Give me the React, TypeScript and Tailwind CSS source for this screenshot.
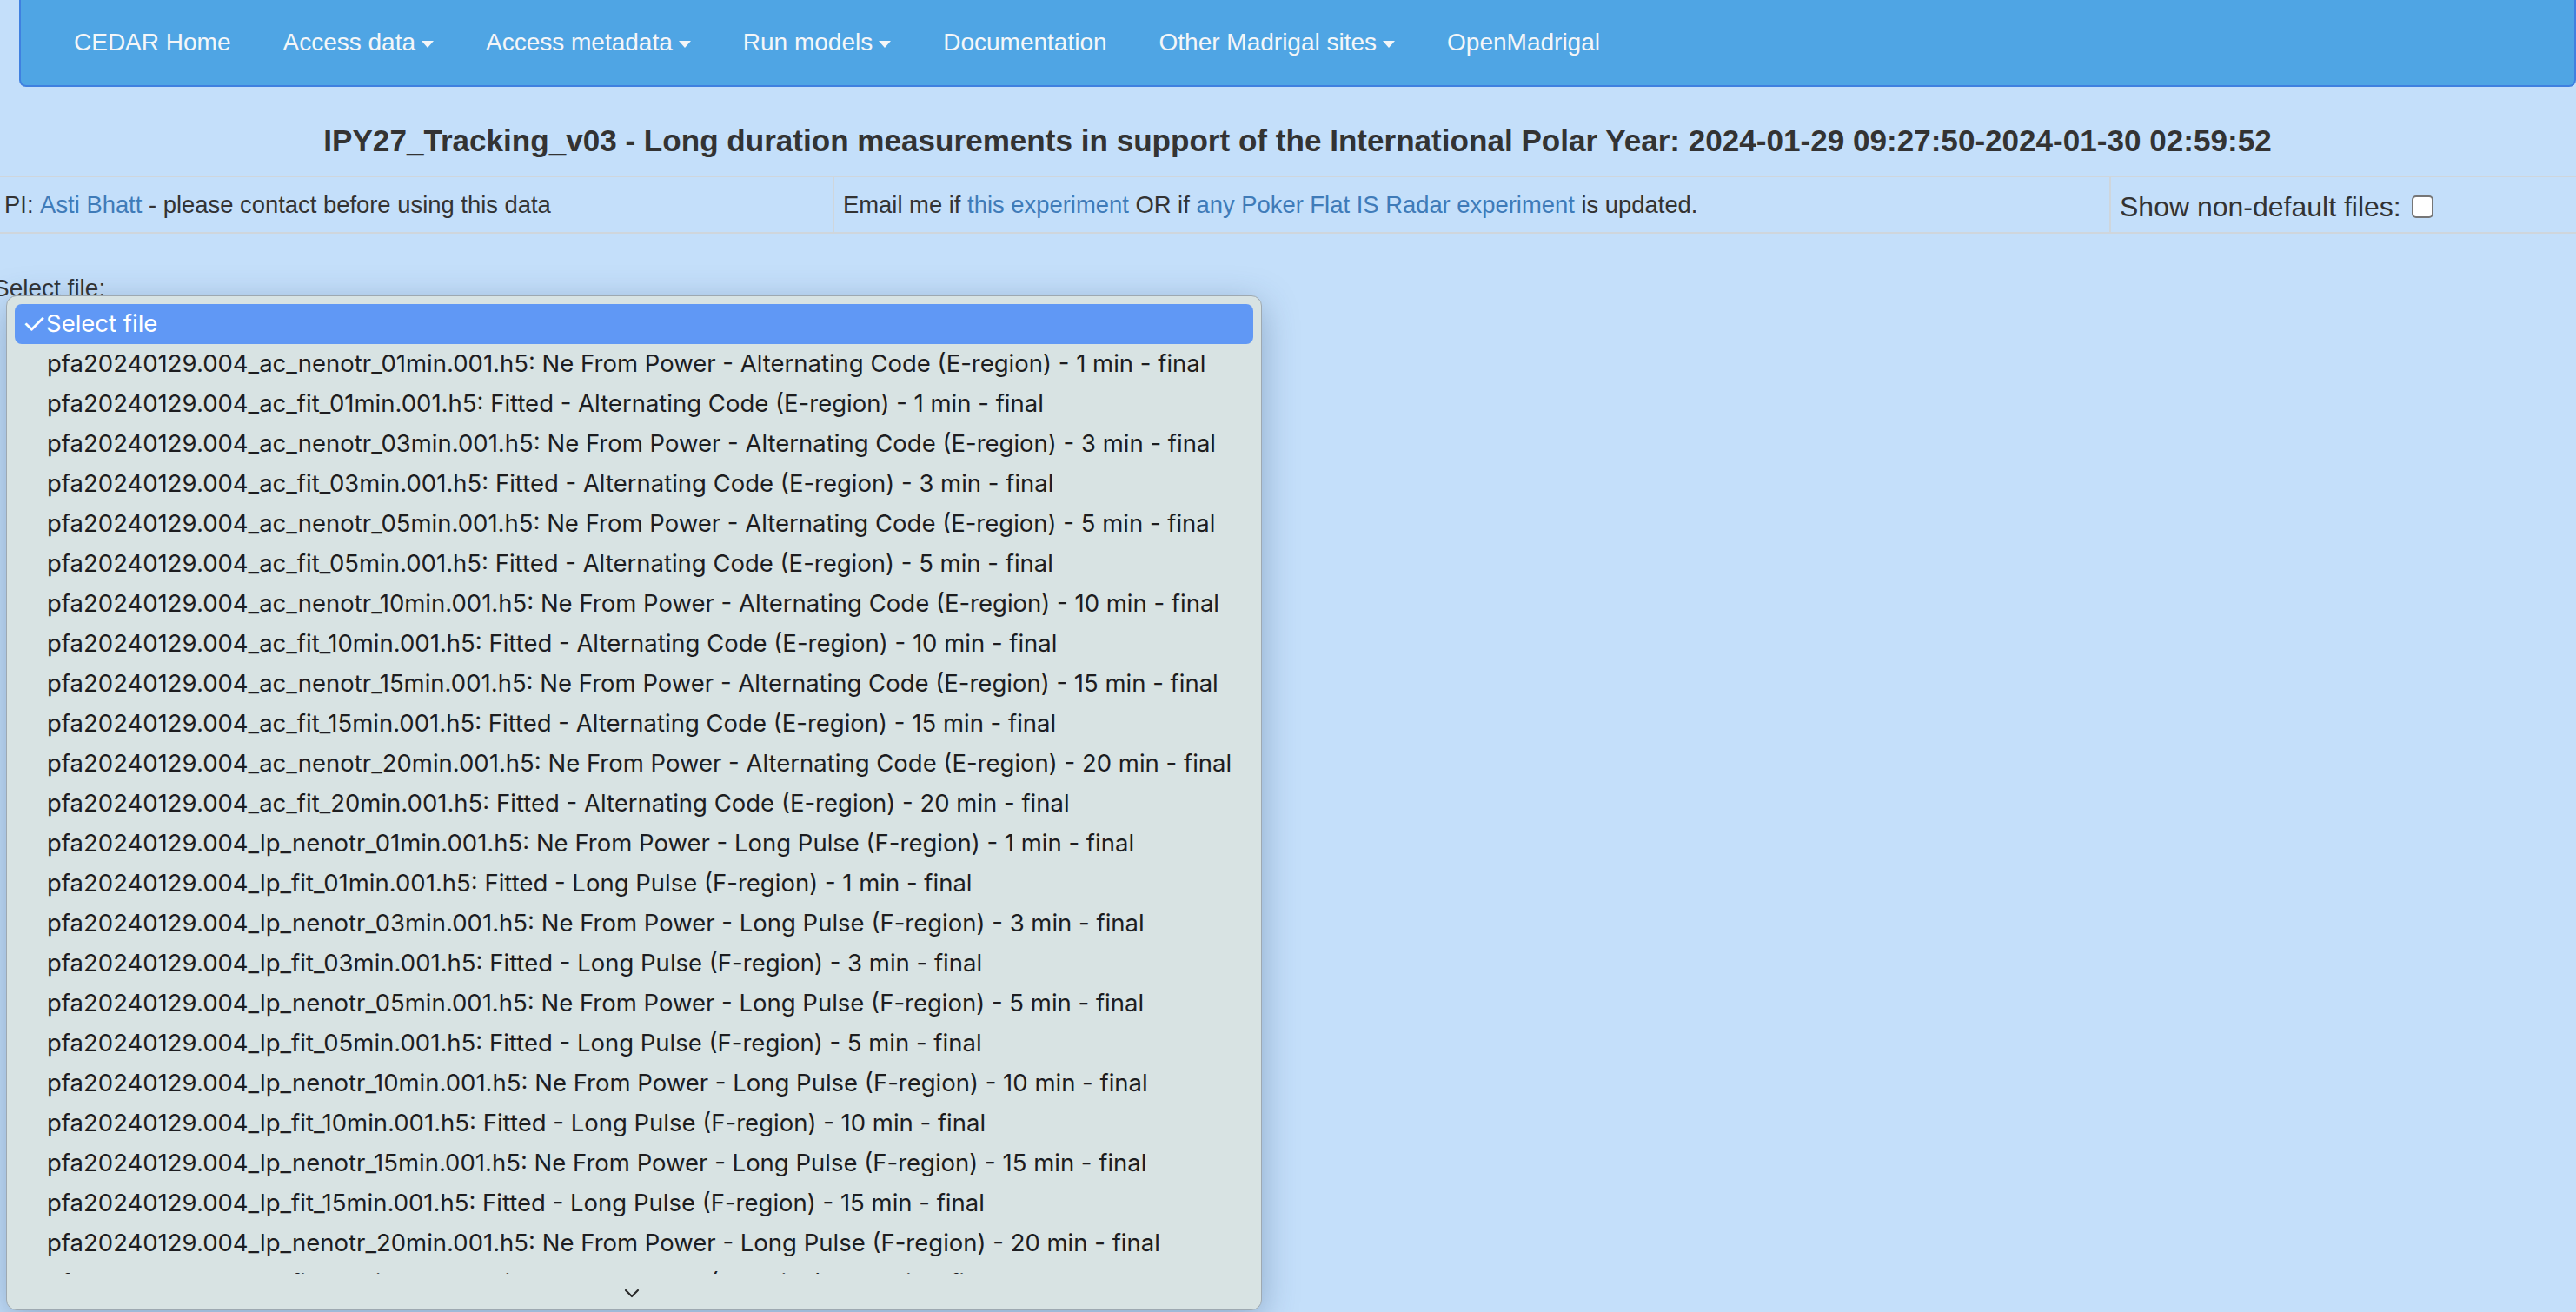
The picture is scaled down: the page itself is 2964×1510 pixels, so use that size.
import React from "react";

const NAV = [
  { label: "CEDAR Home" },
  { label: "Access data", caret: true },
  { label: "Access metadata", caret: true },
  { label: "Run models", caret: true },
  { label: "Documentation" },
  { label: "Other Madrigal sites", caret: true },
  { label: "OpenMadrigal" },
];

const MINS = ["01", "03", "05", "10", "15", "20"];

function buildFiles() {
  const out: string[] = [];
  const groups = [
    { code: "ac", name: "Alternating Code (E-region)" },
    { code: "lp", name: "Long Pulse (F-region)" },
  ];
  for (const g of groups) {
    for (const m of MINS) {
      const n = String(Number(m));
      out.push(`pfa20240129.004_${g.code}_nenotr_${m}min.001.h5: Ne From Power - ${g.name} - ${n} min - final`);
      out.push(`pfa20240129.004_${g.code}_fit_${m}min.001.h5: Fitted - ${g.name} - ${n} min - final`);
    }
  }
  return out;
}

const FILES = buildFiles();

export default function App() {
  return (
    <div className="relative min-h-[1510px] w-full overflow-hidden bg-[#c4dffa] font-['Liberation_Sans',Arial,sans-serif] text-[#333]">
      <nav className="ml-[22px] flex h-[100px] items-center rounded-b-[8px] border-x-2 border-b-2 border-[#3f80e0] bg-[#4fa5e4] pl-[31px]">
        {NAV.map((n) => (
          <a key={n.label} className="flex items-center px-[30px] text-[28px] text-[#f4f6f8]">
            {n.label}
            {n.caret && (
              <span className="ml-[7px] mt-[4px] inline-block h-0 w-0 border-x-[7px] border-t-[8px] border-x-transparent border-t-[#f4f6f8]" />
            )}
          </a>
        ))}
      </nav>

      <h4 className="mt-[42px] pl-[22px] text-center text-[35.1px] font-bold leading-[40px] text-[#333]">
        IPY27_Tracking_v03 - Long duration measurements in support of the International Polar Year: 2024-01-29 09:27:50-2024-01-30 02:59:52
      </h4>

      <div className="mt-[20px] flex h-[67px] items-center border-y-2 border-[#cfd6dc] text-[27.4px]">
        <div className="flex h-full w-[958px] items-center pl-[5px]">
          PI:&nbsp;<a className="text-[#3f7bb8]">Asti Bhatt</a>&nbsp;- please contact before using this data
        </div>
        <div className="flex h-full w-[1469px] items-center border-l-2 border-[#cfd6dc] pl-[10px]">
          Email me if&nbsp;<a className="text-[#3f7bb8]">this experiment</a>&nbsp;OR if&nbsp;
          <a className="text-[#3f7bb8]">any Poker Flat IS Radar experiment</a>&nbsp;is updated.
        </div>
        <div className="flex h-full flex-1 items-center border-l-2 border-[#cfd6dc] pl-[10px] pt-[4px] text-[32px]">
          Show non-default files:
          <span className="ml-[12px] inline-block h-[26px] w-[25px] rounded-[5px] border-2 border-[#767676] bg-white" />
        </div>
      </div>

      <div className="mt-[47px] ml-[-8px] text-[28px] leading-[32px]">Select file:</div>

      <div className="absolute left-[7px] top-[340px] flex h-[1168px] w-[1445px] flex-col rounded-[12px] border border-[#9ea9b1] bg-[#d8e3e3] shadow-[0_10px_40px_rgba(40,70,110,0.35)] font-['Inter','Noto_Sans',sans-serif] text-[27.5px] text-[#1d1d1f]">
        <div className="h-[1125px] overflow-hidden px-[9px] pt-[9px]">
          <div className="flex h-[46px] items-center rounded-[8px] bg-[#6098f5] pl-[8px] text-white">
            <span className="w-[28px] text-[32px] leading-none">✓</span>
            Select file
          </div>
          {FILES.map((f) => (
            <div key={f} className="flex h-[46px] items-center whitespace-nowrap pl-[37px]">
              {f}
            </div>
          ))}
        </div>
        <div className="flex flex-1 items-center justify-center">
          <svg width="18" height="12" viewBox="0 0 18 12" className="ml-[-6px] mt-[4px]">
            <path d="M2 2 L9 9 L16 2" fill="none" stroke="#2a2a2a" strokeWidth="2.2" strokeLinecap="round" strokeLinejoin="round" />
          </svg>
        </div>
      </div>
    </div>
  );
}
